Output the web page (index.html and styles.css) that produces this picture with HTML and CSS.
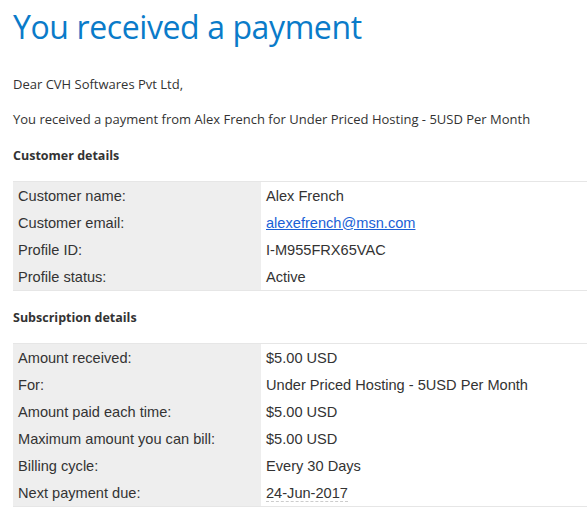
FILE: index.html
```html
<!DOCTYPE html>
<html>
<head>
<meta charset="utf-8">
<link rel="stylesheet" href="styles.css">
</head>
<body>
<div class="mail">
  <h1 class="title">You received a payment</h1>
  <p class="text greet">Dear CVH Softwares Pvt Ltd,</p>
  <p class="text">You received a payment from Alex French for Under Priced Hosting - 5USD Per Month</p>
  <h2 class="section">Customer details</h2>
  <table class="details">
    <tr><td class="label">Customer name:</td><td class="value">Alex French</td></tr>
    <tr><td class="label">Customer email:</td><td class="value"><a class="link" href="#">alexefrench@msn.com</a></td></tr>
    <tr><td class="label">Profile ID:</td><td class="value">I-M955FRX65VAC</td></tr>
    <tr><td class="label">Profile status:</td><td class="value">Active</td></tr>
  </table>
  <h2 class="section section-next">Subscription details</h2>
  <table class="details">
    <tr><td class="label">Amount received:</td><td class="value">$5.00 USD</td></tr>
    <tr><td class="label">For:</td><td class="value">Under Priced Hosting - 5USD Per Month</td></tr>
    <tr><td class="label">Amount paid each time:</td><td class="value">$5.00 USD</td></tr>
    <tr><td class="label">Maximum amount you can bill:</td><td class="value">$5.00 USD</td></tr>
    <tr><td class="label">Billing cycle:</td><td class="value">Every 30 Days</td></tr>
    <tr><td class="label">Next payment due:</td><td class="value"><span class="date">24-Jun-2017</span></td></tr>
  </table>
</div>
</body>
</html>
```
FILE: styles.css
```css
html, body {
  margin: 0;
  padding: 0;
  background: #fff;
}
.mail {
  padding: 0 0 0 13px;
  font-family: "Open Sans", "Liberation Sans", sans-serif;
  color: #333;
}
.title {
  margin: 0;
  padding-top: 7px;
  font-weight: normal;
  font-size: 32px;
  line-height: 40px;
  color: #0a7bc9;
  letter-spacing: -0.4px;
}
.text {
  margin: 0;
  font-size: 13px;
  line-height: 18px;
  color: #333;
}
.greet {
  margin-top: 28px;
  margin-bottom: 17px;
}
.section {
  margin: 19px 0 16px;
  font-size: 12.5px;
  line-height: 18px;
  font-weight: bold;
  color: #333;
}
.section-next {
  margin-top: 18px;
}
.details {
  width: 574px;
  border-collapse: collapse;
  font-family: "Liberation Sans", Arial, sans-serif;
  font-size: 14.6px;
  color: #333;
  border-top: 1px solid #e6e6e6;
  border-bottom: 1px solid #e6e6e6;
}
.details td {
  height: 27px;
  padding: 0 5px;
  vertical-align: middle;
}
.label {
  width: 238px;
  background: #eeeeee;
  padding-left: 6px;
}
.link {
  color: #1a5fd6;
  text-decoration: underline;
}
.date {
  border-bottom: 1px dashed #ccc;
}
```
